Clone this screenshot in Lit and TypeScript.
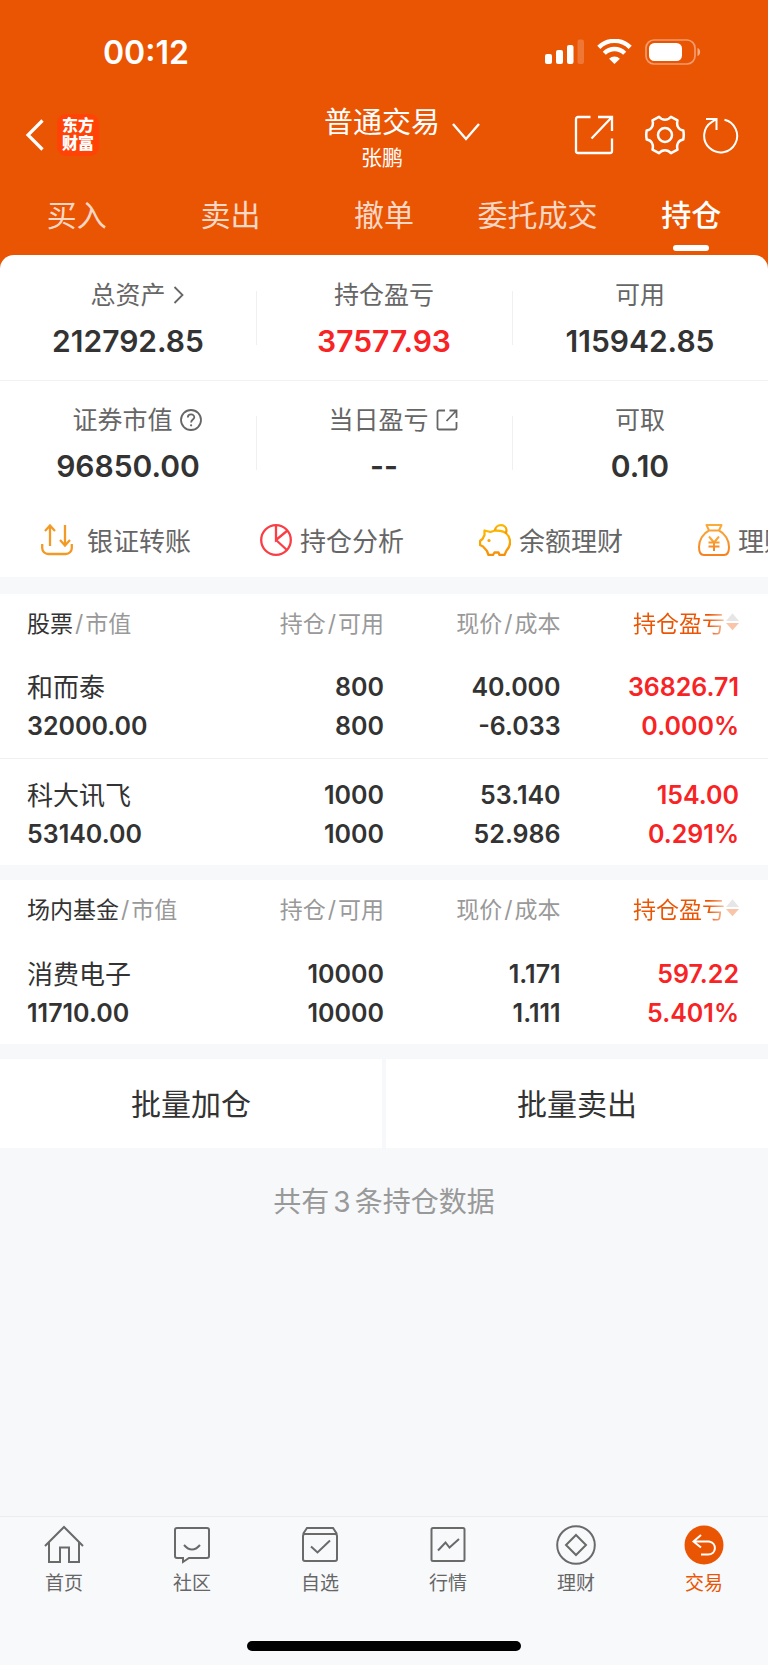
import { LitElement, html, css, svg } from "lit";
import { customElement, state } from "lit/decorators.js";
import { classMap } from "lit/directives/class-map.js";

interface Holding {
  name: string;
  value: string;
  held: string;
  usable: string;
  price: string;
  cost: string;
  profit: string;
  rate: string;
}

const stocks: Holding[] = [
  { name: "和而泰", value: "32000.00", held: "800", usable: "800", price: "40.000", cost: "-6.033", profit: "36826.71", rate: "0.000%" },
  { name: "科大讯飞", value: "53140.00", held: "1000", usable: "1000", price: "53.140", cost: "52.986", profit: "154.00", rate: "0.291%" },
];

const funds: Holding[] = [
  { name: "消费电子", value: "11710.00", held: "10000", usable: "10000", price: "1.171", cost: "1.111", profit: "597.22", rate: "5.401%" },
];

const tabs = ["买入", "卖出", "撤单", "委托成交", "持仓"];

const signalIcon = svg`<svg width="39" height="25" viewBox="0 0 39 25" fill="#fff" aria-hidden="true">
  <rect x="0" y="15" width="7" height="10" rx="2"/><rect x="11" y="11" width="7" height="14" rx="2"/>
  <rect x="22" y="6" width="6.5" height="19" rx="2"/><rect x="32.500" y="0.500" width="6.500" height="24.500" rx="2" opacity=".2"/></svg>`;

const wifiIcon = svg`<svg width="35" height="25" viewBox="0 0 35 25" fill="none" stroke="#fff" stroke-width="4.400" aria-hidden="true">
  <path d="M1.800 8.300a22.500 22.500 0 0 1 31.400 0"/><path d="M7.300 14.200a14.500 14.500 0 0 1 20.400 0"/>
  <path d="M17.500 25l-5.400-5.300a7.700 7.700 0 0 1 10.800 0z" fill="#fff" stroke="none"/></svg>`;

const batteryIcon = svg`<svg width="56" height="26" viewBox="0 0 56 26" aria-hidden="true">
  <rect x="1" y="1" width="49" height="24" rx="8" fill="none" stroke="#fff" stroke-opacity=".42" stroke-width="1.700"/>
  <rect x="4" y="4" width="33" height="18" rx="5.500" fill="#fff"/><path d="M52.500 9c3.500 1 3.500 7 0 8z" fill="#fff" opacity=".5"/></svg>`;

const backIcon = svg`<svg width="20" height="32" viewBox="0 0 20 32" fill="none" stroke="#fff" stroke-width="3.200" aria-hidden="true"><path d="M17.500 1.500L3 16l14.500 14.500"/></svg>`;

const chevronDown = svg`<svg width="28" height="20" viewBox="0 0 28 20" fill="none" stroke="#fff" stroke-width="2.400" aria-hidden="true"><path d="M1 2l13 15L27 2"/></svg>`;

const shareIcon = svg`<svg width="40" height="40" viewBox="0 0 40 40" fill="none" stroke="#fff" stroke-width="2.300" aria-hidden="true">
  <path d="M16.500 2H4a2 2 0 0 0-2 2v32a2 2 0 0 0 2 2h32a2 2 0 0 0 2-2V23.500M24 2h14v14M38 2L17.500 23.500"/></svg>`;

const gearIcon = svg`<svg width="40" height="40" viewBox="0 0 40 40" fill="none" stroke="#fff" stroke-width="2.500" stroke-linejoin="round" aria-hidden="true">
  <path d="M14 1.800Q16.500 4.800 20 4.800T26 1.800L32.500 5.300Q31.500 9 33 12T38.300 15.500Q39.200 20 38.300 24.500Q34.500 25 33 28T32.500 34.700L26 38.200Q23.500 35.200 20 35.200T14 38.200L7.500 34.700Q8.500 31 7 28T1.700 24.500Q.8 20 1.700 15.500Q5.500 15 7 12T7.500 5.300Z"/><circle cx="20" cy="20" r="7"/></svg>`;

const refreshIcon = svg`<svg width="36" height="38" viewBox="0 0 36 38" fill="none" stroke="#fff" stroke-width="2" aria-hidden="true">
  <path d="M21.500 3.800A16.500 16.500 0 1 1 9 5.800L13.500 3M3 3h10.500v11"/></svg>`;

const arrowRight = svg`<svg width="11" height="18" viewBox="0 0 11 18" fill="none" stroke="#666" stroke-width="1.800" aria-hidden="true"><path d="M1.500 1l8 8-8 8"/></svg>`;

const helpIcon = svg`<svg width="22" height="22" viewBox="0 0 22 22" fill="none" stroke="#666" stroke-width="1.800" aria-hidden="true">
  <circle cx="11" cy="11" r="10"/><path d="M7.800 8.500c0-4 6.500-4 6.500-.3 0 2.300-3.200 2.400-3.200 5.300"/><circle cx="11.100" cy="16.300" r="1.100" fill="#666" stroke="none"/></svg>`;

const openIcon = svg`<svg width="22" height="22" viewBox="0 0 22 22" fill="none" stroke="#666" stroke-width="1.800" aria-hidden="true">
  <path d="M9 1.500H3A1.500 1.500 0 0 0 1.500 3v16A1.500 1.500 0 0 0 3 20.500h16a1.500 1.500 0 0 0 1.500-1.500v-6M13.500 1.500h7V9M20.500 1.500L10.500 12"/></svg>`;

const transferIcon = svg`<svg width="38" height="32" viewBox="0 0 38 32" fill="none" stroke="#f39a26" stroke-width="2.300" aria-hidden="true">
  <path d="M9 22V2M4 7l5-5.500L14 7M24 1v20M19 16l5 5.500 5-5.500M1.200 20v4a6 6 0 0 0 6 6h17.600a6 6 0 0 0 6-6v-4"/></svg>`;

const pieIcon = svg`<svg width="32" height="32" viewBox="0 0 32 32" fill="none" stroke="#fb3d45" stroke-width="2.300" aria-hidden="true">
  <circle cx="16" cy="16" r="14.800"/><path d="M16 1v15l11.500-9.500M16 16l11.500 10.500"/></svg>`;

const pigIcon = svg`<svg width="32" height="32" viewBox="0 0 32 32" fill="none" stroke="url(#pg)" stroke-width="2.300" stroke-linejoin="round" aria-hidden="true">
  <defs><linearGradient id="pg" x1="0" y1="0" x2="0" y2="1"><stop offset="0" stop-color="#fbb900"/><stop offset="1" stop-color="#f78f0a"/></linearGradient></defs>
  <path d="M16 6.500L11.500 8 5.500 6.500 5.500 11 3.500 15 1 17V21L4 22.500 8 27 9.500 31H14l1.500-2.500h4L20.500 31H25.500L27.500 26.500C33 21 32 11.500 25 8 22 6.500 19 6.500 16 6.500z"/><path d="M16 6.500c.5-7 11-7 11.500-.5 0 1.500-.3 2.500-1 3.500"/><circle cx="10" cy="16.500" r="1.600" fill="#f9a604" stroke="none"/></svg>`;

const bagIcon = svg`<svg width="32" height="32" viewBox="0 0 32 32" fill="none" stroke="url(#bg)" stroke-width="2" stroke-linejoin="round" aria-hidden="true">
  <defs><linearGradient id="bg" x1="0" y1="0" x2="0" y2="1"><stop offset="0" stop-color="#fbab3c"/><stop offset="1" stop-color="#f5821f"/></linearGradient></defs>
  <path d="M11 6.500L8.500 1h15L21 6.500zM11 6.500C5 9.500 1 16 1 23c0 5 1.500 8 5 8h20c3.500 0 5-3 5-8 0-7-4-13.500-10-16.500"/><path d="M11 12.500l5 6 5-6M10.500 18.500h11M10.500 22.500h11M16 18.500V27"/></svg>`;

const navItems = [
  { label: "首页", icon: svg`<path d="M1 21L20 2l19 19M5 17.500V37h11V22.500h9V37h10V17.500"/>` },
  { label: "社区", icon: svg`<path d="M5 3h30a2 2 0 0 1 2 2v26a2 2 0 0 1-2 2H17l-6 4v-4H5a2 2 0 0 1-2-2V5a2 2 0 0 1 2-2zM12 20q8 9 16 0"/>` },
  { label: "自选", icon: svg`<path d="M3 9l4-6h26l4 6M5 9h30a2 2 0 0 1 2 2v23a2 2 0 0 1-2 2H5a2 2 0 0 1-2-2V11a2 2 0 0 1 2-2zM11 21.500l6.500 6L30 15.500"/>` },
  { label: "行情", icon: svg`<path d="M5 3h30a1.500 1.500 0 0 1 1.500 1.500v30A1.500 1.500 0 0 1 35 36H5a1.500 1.500 0 0 1-1.500-1.500v-30A1.500 1.500 0 0 1 5 3zM10 25.500l7.500-8 4 5L31 14"/>` },
  { label: "理财", icon: svg`<circle cx="20" cy="20" r="18.800"/><path d="M20 10l10 10-10 10L10 20z"/>` },
  { label: "交易", icon: svg`<circle class="disc" cx="20" cy="20" r="19.500"/><path stroke="#fff" d="M17 10l-7.500 6.500 7.500 6M9.500 16.500H25c8.500 1.500 7.500 13-1 13h-7"/>` },
];

@customElement("app-root")
export class AppRoot extends LitElement {
  @state() private tab = "持仓";
  @state() private nav = "交易";

  static styles = css`
    :host {
      display: flex;
      flex-direction: column;
      min-height: 100vh;
      background: #f6f8fa;
      color: #333;
      font-family: Inter, "Noto Sans CJK SC", sans-serif;
    }
    * { box-sizing: border-box; }
    svg { display: block; flex: none; }
    button, a {
      font: inherit;
      color: inherit;
      background: none;
      border: 0;
      padding: 0;
      margin: 0;
      text-decoration: none;
      cursor: pointer;
    }
    .top { background: #ea5504; color: #fff; }
    .status {
      display: flex;
      align-items: center;
      height: 102px;
      padding: 2px 67px 0 103px;
    }
    .clock { font-size: 32px; font-weight: 600; margin-right: auto; }
    .signals { display: flex; gap: 13px; }
    .bar {
      display: grid;
      grid-template-columns: 1fr auto 1fr;
      align-items: start;
      height: 74px;
      padding: 0 29px 0 25px;
    }
    .left { display: flex; align-items: center; gap: 12px; height: 66px; }
    .logo {
      width: 42px;
      height: 42px;
      border-radius: 9px;
      background: #ff4206;
      font-size: 16px;
      line-height: 18px;
      font-weight: 900;
      text-align: center;
      padding-top: 2px;
    }
    .account {
      display: grid;
      grid-template-columns: 28px auto 28px;
      column-gap: 12px;
      align-items: end;
      padding-top: 2px;
    }
    .account-name { font-size: 29px; line-height: 38px; grid-column: 2; }
    .account svg { grid-column: 3; }
    .owner { grid-column: 1 / -1; font-size: 21px; line-height: 32px; text-align: center; }
    .actions { display: flex; justify-content: flex-end; align-items: center; height: 66px; }
    .gear { margin: 0 18px 0 31px; }
    .tabs { display: grid; grid-template-columns: repeat(5, 1fr); height: 79px; padding-bottom: 4px; }
    .tab {
      display: flex;
      flex-direction: column;
      align-items: center;
      justify-content: flex-end;
      gap: 8px;
      font-size: 30px;
      line-height: 44px;
      color: #fbd8c6;
      white-space: nowrap;
    }
    .tab::after { content: ""; width: 36px; height: 6px; border-radius: 3px; }
    .tab.on { color: #fff; font-weight: 500; }
    .tab.on::after { background: #fff; }
    .sheet { background: #ea5504; }
    .summary { background: #fff; border-radius: 14px 14px 0 0; }
    .stats { display: grid; grid-template-columns: repeat(3, 1fr); height: 125px; }
    .stats + .stats { box-shadow: inset 0 1px #f1f1f3; }
    .stat {
      display: flex;
      flex-direction: column;
      align-items: center;
      padding-top: 24px;
      background: linear-gradient(#f0f0f2, #f0f0f2) no-repeat left 36px / 1px 54px;
    }
    .stat:first-child { background: none; }
    .label { display: flex; align-items: center; gap: 7px; font-size: 25px; line-height: 32px; color: #666; }
    .label.with-icon { padding-left: 18px; }
    .num { font-size: 30px; line-height: 36px; font-weight: 600; margin-top: 12px; }
    .red { color: #f82324; }
    .links { display: flex; height: 72px; padding: 0 0 3px 41px; overflow: hidden; }
    .link {
      flex: 0 0 219px;
      display: flex;
      align-items: center;
      gap: 8px;
      font-size: 26px;
      color: #666;
      white-space: nowrap;
    }
    .group { margin-top: 15px; background: #fff; }
    .summary-wrap + .group { margin-top: 17px; }
    table { width: 100%; table-layout: fixed; border-collapse: collapse; }
    .c1 { width: 30%; }
    .c2 { width: 20%; }
    .c3 { width: 23%; }
    .c4 { width: 27%; }
    th, td { padding: 0; text-align: right; font-weight: 400; }
    th:first-child, td:first-child { text-align: left; padding-left: 27px; }
    th:last-child, td:last-child { padding-right: 29px; }
    th { height: 57px; padding-bottom: 2px; font-size: 23px; color: #999; white-space: nowrap; }
    .kind { color: #333; }
    .slash { margin: 0 2px; }
    .sort { display: inline-flex; align-items: center; gap: 1px; color: #ea5504; vertical-align: middle; }
    .sort-text {
      background: linear-gradient(90deg, #ea5504 82%, #f8c4a8);
      background-clip: text;
      -webkit-background-clip: text;
      color: transparent;
    }
    tbody tr + tr { border-top: 1px solid #f1f1f3; }
    td { height: 107px; padding-top: 6px; font-size: 25px; font-weight: 600; line-height: 39px; }
    .line { display: block; }
    .name { font-size: 26px; font-weight: 400; }
    .batch { display: grid; grid-template-columns: 1fr 1fr; gap: 4px; margin-top: 15px; }
    .batch button { height: 89px; padding-bottom: 4px; background: #fff; font-size: 30px; }
    .total { margin: 32px 0 0; text-align: center; font-size: 28px; line-height: 44px; color: #999; }
    .count { margin: 0 4px; }
    .dock { margin-top: auto; border-top: 1px solid #ebecee; background: #f8f9fb; }
    .nav { display: grid; grid-template-columns: repeat(6, 1fr); padding-top: 8px; }
    .nav-item {
      display: flex;
      flex-direction: column;
      align-items: center;
      gap: 5px;
      font-size: 19px;
      line-height: 28px;
      color: #666;
    }
    .nav-item svg { fill: none; stroke: #6a6a6a; stroke-width: 2; }
    .nav-item .disc { fill: #ea5504; stroke: none; }
    .nav-item.on { color: #ea5504; }
    .home-bar { width: 274px; height: 10px; border-radius: 5px; background: #000; margin: 43px auto 14px; }
  `;

  private group(kind: string, rows: Holding[]) {
    return html`<section class="group">
      <table>
        <colgroup><col class="c1" /><col class="c2" /><col class="c3" /><col class="c4" /></colgroup>
        <thead>
          <tr>
            <th scope="col"><span class="kind">${kind}</span><span class="slash">/</span>市值</th>
            <th scope="col">持仓<span class="slash">/</span>可用</th>
            <th scope="col">现价<span class="slash">/</span>成本</th>
            <th scope="col">
              <button class="sort"><span class="sort-text">持仓盈亏</span><svg width="13" height="20" viewBox="0 0 14 20" aria-hidden="true"><path d="M0 9l7-8.500L14 9z" fill="#e6e6e6"/><path d="M0 11h14l-7 8z" fill="#fac4a9"/></svg></button>
            </th>
          </tr>
        </thead>
        <tbody>
          ${rows.map(
            (r) => html`<tr>
              <td><span class="line name">${r.name}</span><span class="line">${r.value}</span></td>
              <td><span class="line">${r.held}</span><span class="line">${r.usable}</span></td>
              <td><span class="line">${r.price}</span><span class="line">${r.cost}</span></td>
              <td class="red"><span class="line">${r.profit}</span><span class="line">${r.rate}</span></td>
            </tr>`
          )}
        </tbody>
      </table>
    </section>`;
  }

  render() {
    return html`
      <header class="top">
        <div class="status">
          <span class="clock">00:12</span>
          <span class="signals">${signalIcon}${wifiIcon}${batteryIcon}</span>
        </div>
        <div class="bar">
          <div class="left"><button aria-label="返回">${backIcon}</button><div class="logo">东方<br />财富</div></div>
          <button class="account">
            <span class="account-name">普通交易</span>${chevronDown}
            <span class="owner">张鹏</span>
          </button>
          <div class="actions">
            <button aria-label="分享">${shareIcon}</button>
            <button class="gear" aria-label="设置">${gearIcon}</button>
            <button aria-label="刷新">${refreshIcon}</button>
          </div>
        </div>
        <nav class="tabs">
          ${tabs.map(
            (t) => html`<button class=${classMap({ tab: true, on: t === this.tab })} @click=${() => (this.tab = t)}>${t}</button>`
          )}
        </nav>
      </header>
      <div class="sheet summary-wrap">
        <section class="summary">
          <div class="stats">
            <div class="stat"><span class="label with-icon">总资产${arrowRight}</span><span class="num">212792.85</span></div>
            <div class="stat"><span class="label">持仓盈亏</span><span class="num red">37577.93</span></div>
            <div class="stat"><span class="label">可用</span><span class="num">115942.85</span></div>
          </div>
          <div class="stats">
            <div class="stat"><span class="label with-icon">证券市值 ${helpIcon}</span><span class="num">96850.00</span></div>
            <div class="stat"><span class="label with-icon">当日盈亏 ${openIcon}</span><span class="num">--</span></div>
            <div class="stat"><span class="label">可取</span><span class="num">0.10</span></div>
          </div>
          <nav class="links">
            <a class="link" href="#transfer">${transferIcon}银证转账</a>
            <a class="link" href="#analysis">${pieIcon}持仓分析</a>
            <a class="link" href="#balance">${pigIcon}余额理财</a>
            <a class="link" href="#wealth">${bagIcon}理财</a>
          </nav>
        </section>
      </div>
      ${this.group("股票", stocks)} ${this.group("场内基金", funds)}
      <div class="batch"><button>批量加仓</button><button>批量卖出</button></div>
      <p class="total">共有<span class="count">3</span>条持仓数据</p>
      <footer class="dock">
        <nav class="nav">
          ${navItems.map(
            (n) => html`<button class=${classMap({ "nav-item": true, on: n.label === this.nav })} @click=${() => (this.nav = n.label)}>
              <svg width="40" height="40" viewBox="0 0 40 40" aria-hidden="true">${n.icon}</svg>${n.label}
            </button>`
          )}
        </nav>
        <div class="home-bar"></div>
      </footer>
    `;
  }
}
